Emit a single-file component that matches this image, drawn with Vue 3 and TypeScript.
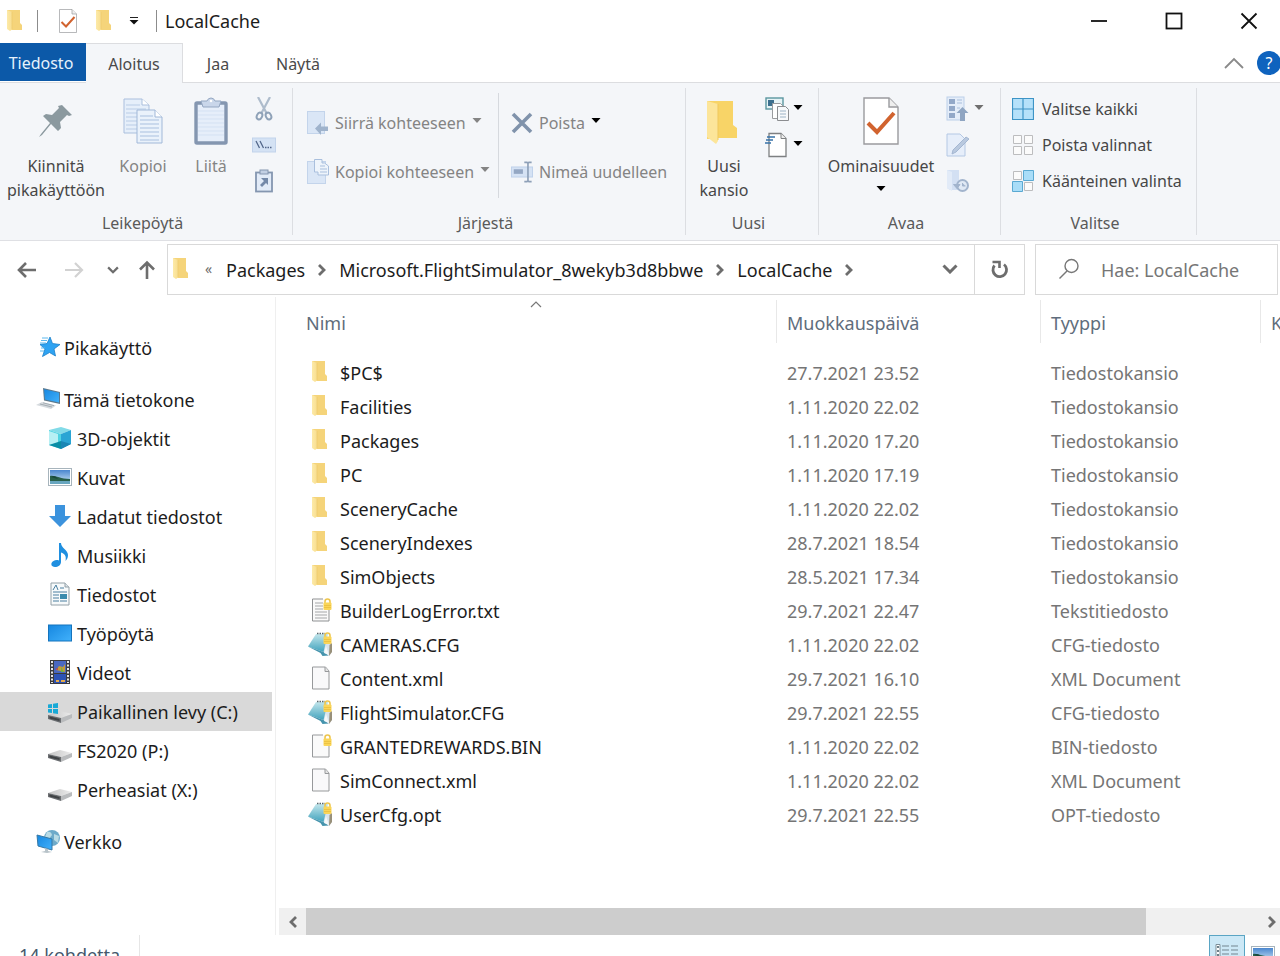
<script setup lang="ts">
interface NavItem {
  label: string
  icon: string
  selected?: boolean
}

interface FileRow {
  name: string
  icon: string
  date: string
  type: string
}

const navGroups: { root: NavItem; children: NavItem[] }[] = [
  { root: { label: 'Pikakäyttö', icon: 'star' }, children: [] },
  {
    root: { label: 'Tämä tietokone', icon: 'computer' },
    children: [
      { label: '3D-objektit', icon: 'cube' },
      { label: 'Kuvat', icon: 'pictures' },
      { label: 'Ladatut tiedostot', icon: 'download' },
      { label: 'Musiikki', icon: 'music' },
      { label: 'Tiedostot', icon: 'documents' },
      { label: 'Työpöytä', icon: 'desktop' },
      { label: 'Videot', icon: 'video' },
      { label: 'Paikallinen levy (C:)', icon: 'windrive', selected: true },
      { label: 'FS2020 (P:)', icon: 'drive' },
      { label: 'Perheasiat (X:)', icon: 'drive' },
    ],
  },
  { root: { label: 'Verkko', icon: 'network' }, children: [] },
]

const files: FileRow[] = [
  { name: '$PC$', icon: 'folder', date: '27.7.2021 23.52', type: 'Tiedostokansio' },
  { name: 'Facilities', icon: 'folder', date: '1.11.2020 22.02', type: 'Tiedostokansio' },
  { name: 'Packages', icon: 'folder', date: '1.11.2020 17.20', type: 'Tiedostokansio' },
  { name: 'PC', icon: 'folder', date: '1.11.2020 17.19', type: 'Tiedostokansio' },
  { name: 'SceneryCache', icon: 'folder', date: '1.11.2020 22.02', type: 'Tiedostokansio' },
  { name: 'SceneryIndexes', icon: 'folder', date: '28.7.2021 18.54', type: 'Tiedostokansio' },
  { name: 'SimObjects', icon: 'folder', date: '28.5.2021 17.34', type: 'Tiedostokansio' },
  { name: 'BuilderLogError.txt', icon: 'textlock', date: '29.7.2021 22.47', type: 'Tekstitiedosto' },
  { name: 'CAMERAS.CFG', icon: 'config', date: '1.11.2020 22.02', type: 'CFG-tiedosto' },
  { name: 'Content.xml', icon: 'page', date: '29.7.2021 16.10', type: 'XML Document' },
  { name: 'FlightSimulator.CFG', icon: 'config', date: '29.7.2021 22.55', type: 'CFG-tiedosto' },
  { name: 'GRANTEDREWARDS.BIN', icon: 'pagelock', date: '1.11.2020 22.02', type: 'BIN-tiedosto' },
  { name: 'SimConnect.xml', icon: 'page', date: '1.11.2020 22.02', type: 'XML Document' },
  { name: 'UserCfg.opt', icon: 'config', date: '29.7.2021 22.55', type: 'OPT-tiedosto' },
]

const crumbs = ['Packages', 'Microsoft.FlightSimulator_8wekyb3d8bbwe', 'LocalCache']
</script>

<template>
  <div class="window">
    <svg class="defs" aria-hidden="true">
      <defs>
        <linearGradient id="gFolder" x1="0" x2="1" y1="0" y2="0">
          <stop offset="0" stop-color="#fdeaa8" /><stop offset="1" stop-color="#f8de90" />
        </linearGradient>
        <linearGradient id="gBlue" x1="0" x2="1" y1="0" y2="1">
          <stop offset="0" stop-color="#1687e0" /><stop offset="1" stop-color="#41b1fb" />
        </linearGradient>
        <linearGradient id="gDrive" x1="0" x2="1" y1="0" y2="0">
          <stop offset="0" stop-color="#c4c4c4" /><stop offset="1" stop-color="#ececec" />
        </linearGradient>
        <linearGradient id="gNote" x1="0" x2="0" y1="0" y2="1">
          <stop offset="0" stop-color="#c3e6ec" /><stop offset="1" stop-color="#41a3bd" />
        </linearGradient>
        <linearGradient id="gSky" x1="0" x2="0" y1="0" y2="1">
          <stop offset="0" stop-color="#4a86cf" /><stop offset="1" stop-color="#d6ecf7" />
        </linearGradient>
      </defs>
      <symbol id="folder" viewBox="0 0 24 24">
        <path d="M4 1h13v13l2 2v5H8L4 19z" fill="#f5d47a" />
        <path d="M4 1l5 2v17.500l-2 1.500-3-2z" fill="url(#gFolder)" />
        <path d="M9 3v17" stroke="#eac66a" stroke-width=".6" />
      </symbol>
      <symbol id="page" viewBox="0 0 24 24">
        <path d="M4.500 1h13L21 5v18H4.500z" fill="#f9f9fa" stroke="#97999b" />
        <path d="M17 1v4.500h4" fill="#e4e4e4" stroke="#97999b" />
      </symbol>
      <symbol id="lock" viewBox="0 0 24 24">
        <path d="M17 5V3.500a2.500 2.500 0 0 1 5 0V5" fill="none" stroke="#edc54e" stroke-width="1.600" />
        <rect x="15.500" y="4.500" width="8" height="7.500" rx="1" fill="#fad558" />
        <path d="M16 7.500h7M16 9.500h7" stroke="#e6bb3b" stroke-width=".7" />
      </symbol>
      <symbol id="pagelock" viewBox="0 0 24 24">
        <path d="M4.500 1H16v11h5v11H4.500z" fill="#fafafa" />
        <path d="M15 1H4.500v22H21V12" fill="none" stroke="#97999b" />
        <use href="#lock" />
      </symbol>
      <symbol id="textlock" viewBox="0 0 24 24">
        <path d="M4.500 1H16v11h5v11H4.500z" fill="#fafafa" />
        <path d="M15 1H4.500v22H21V12" fill="none" stroke="#8f9193" />
        <path d="M7 5h8M7 8h8M7 11h8M7 14h12M7 17h12M7 20h12" stroke="#a4a6a8" />
        <use href="#lock" />
      </symbol>
      <symbol id="config" viewBox="0 0 24 24">
        <path d="M17 4l5 4 2 12-3 4-7-2z" fill="#d9e4ec" />
        <path d="M21.500 13l2.500-2v9l-3 4z" fill="#98907a" />
        <path d="M8 2h12L15.500 20 0 14.500z" fill="url(#gNote)" />
        <path d="M0 14.500L15.500 20l5 3.500-6 .5-2-3z" fill="#4694ad" />
        <path d="M18 14l3 9-5-2z" fill="#f5f8fa" />
        <path d="M9 1.500h8" stroke="#59666c" stroke-width="1.500" stroke-dasharray="1.500 1" />
        <use href="#lock" />
      </symbol>
      <symbol id="star" viewBox="0 0 24 24">
        <path d="M14 2l2.500 6.500 7.500 1-6 4.500 1.500 7-6-3.500-7 4 2.500-7.500L4 9.500l7-1z" fill="#2ea3f2" stroke="#1b7fc9" stroke-width=".8" />
        <path d="M6 3h6M5 5.500h6M4 8h6M5 13h4M4 16h4" stroke="#5bb8ee" />
      </symbol>
      <symbol id="computer" viewBox="0 0 24 24">
        <path d="M7 1l17 4v12L8 13.500z" fill="#5c788c" />
        <path d="M8 2.200l15 3.600v9.800L9 12.500z" fill="url(#gBlue)" />
        <path d="M6 15l14 3.500-5 3.500L0 18z" fill="#d5dade" />
        <path d="M4 17l12 3M7 15.800l11 2.800" stroke="#96a0a6" stroke-width=".8" />
      </symbol>
      <symbol id="cube" viewBox="0 0 24 24">
        <path d="M1 4l12-3 10 3-10 4z" fill="#82dbe8" />
        <path d="M1 4l12 4v15L1 19z" fill="#4fd3e2" />
        <path d="M1 5l9 3v9l-9 2z" fill="#b7f0f4" />
        <path d="M13 8l10-4v14l-10 5z" fill="#2aa5d4" />
        <path d="M1 19l12-4v8z" fill="#0a8ea6" />
        <path d="M13 15l10 3-10 5z" fill="#1a86b4" />
      </symbol>
      <symbol id="pictures" viewBox="0 0 24 24">
        <rect x=".5" y="3.500" width="23" height="17" fill="#fff" stroke="#a7b4bc" />
        <rect x="2" y="5" width="20" height="14" fill="url(#gSky)" />
        <path d="M2 11c5-1 10 3 20 3v2H2z" fill="#285f4a" />
        <path d="M2 16h20v3H2z" fill="#68a6bf" />
        <path d="M3 12q4-3 7 2z" fill="#18483c" />
      </symbol>
      <symbol id="download" viewBox="0 0 24 24">
        <path d="M7 1h10v11h6L12 23 1 12h6z" fill="#3c93dd" />
      </symbol>
      <symbol id="music" viewBox="0 0 24 24">
        <path d="M11 0h2c0 5 7 7 7 12 0 3-1 4-2.500 6 1-5-.5-7-4.500-8.500V19c0 3-3 5-6 5-4 0-5-4-1.500-6 1.500-1 3.500-1.300 5.500-.5z" fill="#1f8fe0" />
      </symbol>
      <symbol id="documents" viewBox="0 0 24 24">
        <path d="M3 1h14l4 4v18H3z" fill="#f7fafb" stroke="#94a1a8" />
        <path d="M17 1v4h4" fill="#dce3e8" stroke="#94a1a8" />
        <path d="M5 8l3-5 2 5M12 6h4M5 10h14M5 13h6M5 16h6M5 19h6M12 19h7" stroke="#4a7fa0" fill="none" />
        <rect x="12" y="12" width="7" height="5" fill="#3b8bad" />
      </symbol>
      <symbol id="desktop" viewBox="0 0 24 24">
        <rect x=".5" y="4" width="23" height="16" fill="url(#gBlue)" stroke="#1574bd" />
      </symbol>
      <symbol id="video" viewBox="0 0 24 24">
        <rect x="2" width="20" height="24" fill="#3a3a3d" />
        <rect x="6" y="1" width="12" height="12" fill="#4a68c0" />
        <rect x="6" y="14" width="12" height="9" fill="#2d53b5" />
        <path d="M8 10l3-4 4 1 2-3v8z" fill="#c09a3a" />
        <path d="M7 9l3-1v2z" fill="#c23f4e" />
        <path d="M13 7l3 5h-3z" fill="#75b13c" />
        <path d="M8 21h3M13 21h4" stroke="#e5a94a" stroke-width="2" />
        <path d="M4 1v22M20 1v22" stroke="#e6e6e6" stroke-width="2" stroke-dasharray="2 1.500" />
      </symbol>
      <symbol id="drive" viewBox="0 0 24 24">
        <path d="M0 16l12-4 12 3-11 4z" fill="url(#gDrive)" />
        <path d="M0 16l13 3v5L0 20z" fill="#6a6d70" />
        <path d="M1.500 17.500l10 2.500v2L1.500 19.500z" fill="#3f4244" />
        <path d="M13 19l11-4v4l-11 5z" fill="#b9bbbd" />
      </symbol>
      <symbol id="windrive" viewBox="0 0 24 24">
        <use href="#drive" />
        <path d="M0 5.500l4-.6v4H0zM5 4.700l5-.7v4.900H5zM0 10h4v4l-4-.6zM5 10h5v5l-5-.8z" fill="#18a9d6" />
      </symbol>
      <symbol id="network" viewBox="0 0 24 24">
        <circle cx="16" cy="9" r="8" fill="#6eaac9" />
        <path d="M11 3q4-1 5 3l-3 4-4-2zM18 5l5 2-1 7-4-3z" fill="#b9dbe5" />
        <path d="M1 6l15 4v11L2 17z" fill="url(#gBlue)" stroke="#3779a5" />
        <path d="M9 19v3l-4 1 6 1 5-1-4-1v-2z" fill="#b8c3c9" />
      </symbol>
      <symbol id="check" viewBox="0 0 36 48">
        <path d="M1 1h25l9 9v37H1z" fill="#fff" stroke="#9a9b9e" stroke-width="1.400" />
        <path d="M26 1v9h9" fill="#eee" stroke="#9a9b9e" stroke-width="1.400" />
        <path d="M5 26l9 9 17-19" fill="none" stroke="#d1632f" stroke-width="4" />
      </symbol>
      <symbol id="caret" viewBox="0 0 10 5">
        <path d="M.5 0h9L5 5z" fill="currentColor" />
      </symbol>
      <symbol id="chev" viewBox="0 0 12 14">
        <path d="M3 2L8 7l-5 5" fill="none" stroke="currentColor" stroke-width="2.800" />
      </symbol>
      <symbol id="chevdown" viewBox="0 0 16 10">
        <path d="M1.500 1.500L8 8l6.500-6.500" fill="none" stroke="currentColor" stroke-width="3" />
      </symbol>
    </svg>

    <header class="titlebar">
      <svg class="i24 sys"><use href="#folder" /></svg>
      <span class="bar"></span>
      <button class="qa check" aria-label="Ominaisuudet"><svg width="18" height="24"><use href="#check" /></svg></button>
      <button class="qa" aria-label="Uusi kansio"><svg class="i24"><use href="#folder" /></svg></button>
      <button class="qa more" aria-label="Mukauta pikatyökaluriviä">
        <svg width="10" height="8" viewBox="0 0 10 8"><path d="M1 .5h8" stroke="#222" /><path d="M.5 3h9L5 7.500z" fill="#111" /></svg>
      </button>
      <span class="bar"></span>
      <h1>LocalCache</h1>
      <div class="winbtns">
        <button aria-label="Pienennä"><svg width="18" height="18" viewBox="0 0 18 18"><path d="M1 9h16" stroke="#111" stroke-width="1.800" /></svg></button>
        <button aria-label="Suurenna"><svg width="18" height="18" viewBox="0 0 18 18"><rect x="1.500" y="1.500" width="15" height="15" fill="none" stroke="#111" stroke-width="1.800" /></svg></button>
        <button aria-label="Sulje"><svg width="18" height="18" viewBox="0 0 18 18"><path d="M1.500 1.500l15 15M16.500 1.500l-15 15" stroke="#111" stroke-width="1.800" /></svg></button>
      </div>
    </header>

    <nav class="tabs">
      <button class="tab file">Tiedosto</button>
      <button class="tab active">Aloitus</button>
      <button class="tab share">Jaa</button>
      <button class="tab view">Näytä</button>
      <span class="grow"></span>
      <button class="collapse" aria-label="Pienennä valintanauha">
        <svg width="20" height="12" viewBox="0 0 20 12"><path d="M1 11l9-9 9 9" fill="none" stroke="#8a8a8a" stroke-width="1.800" /></svg>
      </button>
      <button class="help" aria-label="Ohje">?</button>
    </nav>

    <section class="ribbon">
      <div class="group clip">
        <div class="body">
          <button class="big pin">
            <svg width="36" height="48" viewBox="0 0 36 48">
              <path d="M24 8l10 10-3 1-2-1-7 7 1 6-3 3-7-7L4 38l-3 2 2-3L12 26l-7-7 3-2 6 1 7-7-1-2z" fill="#8b999f" />
            </svg>
            <span>Kiinnitä<br />pikakäyttöön</span>
          </button>
          <button class="big dim copy">
            <svg width="42" height="48" viewBox="0 0 42 48">
              <path d="M2 2h18l7 6v28H2z" fill="#e6effa" stroke="#aabfdd" />
              <path d="M20 2v6h7" fill="#fff" stroke="#aabfdd" />
              <path d="M4 8h14M4 12h20M4 16h20M4 20h20M4 24h20M4 28h20M4 32h20" stroke="#b9cce6" />
              <path d="M15 13h18l7 7v26H15z" fill="#eaf2fb" stroke="#a1b8d8" />
              <path d="M33 13v7h7" fill="#fff" stroke="#a1b8d8" />
              <path d="M18 19h13M18 23h19M18 27h19M18 31h19M18 35h19M18 39h19M18 43h19" stroke="#a9c0df" />
            </svg>
            <span>Kopioi</span>
          </button>
          <button class="big dim paste">
            <svg width="34" height="48" viewBox="0 0 34 48">
              <rect x="2" y="6" width="30" height="40" rx="1" fill="#e6eefa" stroke="#8496b0" stroke-width="3.400" />
              <path d="M4 14h26M4 18h26M4 22h26M4 26h26M4 30h26M4 34h26M4 38h26" stroke="#d4e1f3" />
              <path d="M7 4h6q1-3 4-3t4 3h6l-2 6H9z" fill="#c9d6ea" stroke="#94a7c2" />
              <circle cx="17" cy="4" r="1.300" fill="#fff" />
            </svg>
            <span>Liitä</span>
          </button>
          <div class="small">
            <button aria-label="Leikkaa">
              <svg width="24" height="24" viewBox="0 0 24 24"><path d="M6 0l9 17M18 0L9 17" stroke="#aebccc" stroke-width="2.200" /><ellipse cx="7.500" cy="19" rx="2.600" ry="3.600" fill="none" stroke="#8fa2b8" stroke-width="2" transform="rotate(25 7.500 19)" /><ellipse cx="16.500" cy="19" rx="2.600" ry="3.600" fill="none" stroke="#8fa2b8" stroke-width="2" transform="rotate(-25 16.500 19)" /></svg>
            </button>
            <button aria-label="Kopioi polku">
              <svg width="24" height="24" viewBox="0 0 24 24"><rect x=".5" y="5" width="23" height="14" fill="#d4e2f4" stroke="#c2d3eb" /><path d="M4 8l3.500 7M8 8l3.500 7" stroke="#53678a" stroke-width="1.300" /><path d="M13 14.500h7" stroke="#53678a" stroke-width="1.500" stroke-dasharray="1.500 1" /></svg>
            </button>
            <button aria-label="Liitä pikakuvake">
              <svg width="24" height="24" viewBox="0 0 24 24"><rect x="4" y="3.500" width="16" height="19" fill="#e2ebf8" stroke="#8496b0" stroke-width="1.800" /><rect x="8" y="1" width="8" height="4" fill="#c3d0e4" stroke="#8496b0" /><path d="M9 9h7v7l-2-2-4 4-2-2 4-4z" fill="#7489a9" /></svg>
            </button>
          </div>
        </div>
        <div class="caption">Leikepöytä</div>
      </div>

      <div class="group organize">
        <div class="body">
          <div class="medium">
            <button class="dim">
              <svg width="22" height="24" viewBox="0 0 22 24"><rect x=".5" y=".5" width="17" height="22" fill="#dae6f6" stroke="#c3d4eb" /><path d="M8 17.500l6-6v4h7v4.500h-7v4z" fill="#9fb3cc" /></svg>
              <span>Siirrä kohteeseen</span><svg class="caret"><use href="#caret" /></svg>
            </button>
            <button class="dim">
              <svg width="22" height="26" viewBox="0 0 22 26"><rect x=".5" y="2.500" width="18" height="22" fill="#dae6f6" stroke="#c3d4eb" /><path d="M7.500.5H15V4h2.500l4 3v9H11v-3H7.500z" fill="#eef4fb" stroke="#a9bfdd" /><path d="M13 7h5M13 10h7M13 13h7" stroke="#a9bfdd" /></svg>
              <span>Kopioi kohteeseen</span><svg class="caret"><use href="#caret" /></svg>
            </button>
          </div>
          <span class="divider"></span>
          <div class="medium second">
            <button class="dim">
              <svg width="22" height="22" viewBox="0 0 22 22"><path d="M2 2l18 18M20 2L2 20" stroke="#8093ab" stroke-width="3.600" /></svg>
              <span>Poista</span><svg class="caret black"><use href="#caret" /></svg>
            </button>
            <button class="dim">
              <svg width="22" height="24" viewBox="0 0 24 24"><rect x=".5" y="6.500" width="23" height="11" fill="#d5e2f4" stroke="#bdd0ea" /><rect x="3" y="9" width="10" height="5" fill="#94a7c3" /><path d="M18.500 2v20M14.500 1.500h3l1 1 1-1h3M14.500 22.500h3l1-1 1 1h3" stroke="#8ea0b8" stroke-width="1.800" fill="none" /></svg>
              <span>Nimeä uudelleen</span>
            </button>
          </div>
        </div>
        <div class="caption">Järjestä</div>
      </div>

      <div class="group new">
        <div class="body">
          <button class="big newfolder">
            <svg width="34" height="48" viewBox="0 0 34 48">
              <path d="M0 4h26v24l4 3v10H10L0 42z" fill="#f8d467" />
              <path d="M0 4l11 3v37l-2 3-9-7z" fill="#fce59a" />
              <path d="M11 7v36" stroke="#efc75c" />
            </svg>
            <span>Uusi<br />kansio</span>
          </button>
          <div class="small pairs">
            <button aria-label="Uusi kohde">
              <svg width="24" height="24" viewBox="0 0 24 24"><rect x="1" y="1" width="17" height="11" fill="#e6f3f6" stroke="#5b96a0" stroke-width="1.400" /><rect x="3" y="3" width="6" height="6" fill="#3c6f8e" /><path d="M7.500 6.500h8l3 3v12h-11z" fill="#fff" stroke="#9a9c9f" /><path d="M12.500 9.500h8l3 3v11h-11z" fill="#f7f9fb" stroke="#8b8d90" /><path d="M15 14h6M15 17h6M15 20h6" stroke="#9cb3c6" /></svg>
              <svg class="caret black"><use href="#caret" /></svg>
            </button>
            <button aria-label="Helppo käyttö">
              <svg width="24" height="26" viewBox="0 0 24 26"><path d="M4 1.500h12l5 5v18H4z" fill="#fff" stroke="#7e8082" stroke-width="1.300" /><path d="M16 1.500v5h5" fill="#eee" stroke="#7e8082" /><path d="M2 5h8M1 8h7M0 11h6" stroke="#3671a8" stroke-width="1.700" /></svg>
              <svg class="caret black"><use href="#caret" /></svg>
            </button>
          </div>
        </div>
        <div class="caption">Uusi</div>
      </div>

      <div class="group open">
        <div class="body">
          <button class="big props">
            <svg width="36" height="48"><use href="#check" /></svg>
            <span>Ominaisuudet</span>
            <svg class="caret black"><use href="#caret" /></svg>
          </button>
          <div class="small pairs">
            <button aria-label="Avaa">
              <svg width="24" height="26" viewBox="0 0 24 26"><rect x="1" y="1" width="17" height="23" fill="#e4edf9" stroke="#bccfe9" /><path d="M3 3h6v5H3zM3 10h6v5H3zM3 17h6v5H3z" fill="#92a8c8" /><path d="M11 4h5M11 7h5M11 12h3" stroke="#a9bedb" /><path d="M16.500 11l6 6h-3.500v8h-5v-8h-3.500z" fill="#8fa5c2" /></svg>
              <svg class="caret grey"><use href="#caret" /></svg>
            </button>
            <button aria-label="Muokkaa">
              <svg width="24" height="24" viewBox="0 0 24 24"><path d="M1 1h13l5 5v17H1z" fill="#e6eefa" stroke="#b4c8e4" /><path d="M6 21l1-4L20 4l3 2L10 19z" fill="#b9c9df" stroke="#a4b7d2" /></svg>
            </button>
            <button aria-label="Historia">
              <svg width="24" height="24" viewBox="0 0 24 24"><path d="M1 1h12v11l2 2v7H4l-3-2z" fill="#d3e0f3" /><path d="M1 1l5 2v19l-5-3z" fill="#e2ebf8" /><circle cx="16.500" cy="16.500" r="5.500" fill="#e0e9f5" stroke="#a2b4cd" stroke-width="2" /><path d="M7.500 15.500l3.500 4 3-4zM16.500 14v3h3" fill="#a2b4cd" stroke="#a2b4cd" /></svg>
            </button>
          </div>
        </div>
        <div class="caption">Avaa</div>
      </div>

      <div class="group select">
        <div class="body">
          <div class="small wide">
            <button>
              <svg width="22" height="22" viewBox="0 0 22 22"><path d="M.5.5h21v21H.5zM11 .5v21M.5 11h21" fill="#b5e1fa" stroke="#3d94c6" stroke-width="1.200" /></svg>
              <span>Valitse kaikki</span>
            </button>
            <button>
              <svg width="22" height="22" viewBox="0 0 22 22"><path d="M1.500 1.500h8v8h-8zM12.500 1.500h8v8h-8zM1.500 12.500h8v8h-8zM12.500 12.500h8v8h-8z" fill="#fbfbfb" stroke="#bcbdbf" /></svg>
              <span>Poista valinnat</span>
            </button>
            <button>
              <svg width="22" height="22" viewBox="0 0 22 22"><path d="M1.500 1.500h8v8h-8zM12.500 12.500h8v8h-8z" fill="#fbfbfb" stroke="#bcbdbf" /><path d="M11.500.5h10v10h-10zM.5 11.500h10v10H.5z" fill="#a9ddf8" stroke="#5aa9d2" /></svg>
              <span>Käänteinen valinta</span>
            </button>
          </div>
        </div>
        <div class="caption">Valitse</div>
      </div>
    </section>

    <section class="addressrow">
      <button class="arrow back" aria-label="Takaisin"><svg width="20" height="18" viewBox="0 0 20 18"><path d="M19 9H3M9 2L2 9l7 7" fill="none" stroke="#6d6d6d" stroke-width="2.600" /></svg></button>
      <button class="arrow forward" aria-label="Eteenpäin"><svg width="20" height="18" viewBox="0 0 20 18"><path d="M1 9h16M11 2l7 7-7 7" fill="none" stroke="#d2d2d2" stroke-width="2.200" /></svg></button>
      <button class="arrow recent" aria-label="Viimeisimmät sijainnit"><svg width="12" height="8"><use href="#chevdown" /></svg></button>
      <button class="arrow up" aria-label="Ylös"><svg width="18" height="20" viewBox="0 0 18 20"><path d="M9 19V3M2 9.500L9 2.500l7 7" fill="none" stroke="#6d6d6d" stroke-width="2.600" /></svg></button>
      <div class="address">
        <svg class="i24"><use href="#folder" /></svg>
        <span class="laquo">«</span>
        <template v-for="c in crumbs" :key="c">
          <button class="crumb">{{ c }}</button>
          <svg class="chev"><use href="#chev" /></svg>
        </template>
        <span class="grow"></span>
        <button class="drop" aria-label="Aiemmat sijainnit"><svg width="16" height="10"><use href="#chevdown" /></svg></button>
        <button class="refresh" aria-label="Päivitä">
          <svg width="20" height="20" viewBox="0 0 20 20"><path d="M14 5.500A6.800 6.800 0 1 1 4.500 6.500" fill="none" stroke="#6d6d6d" stroke-width="2.800" /><path d="M2.500 3h7v6" fill="none" stroke="#6d6d6d" stroke-width="2.600" /></svg>
        </button>
      </div>
      <label class="search">
        <svg width="22" height="22" viewBox="0 0 22 22"><circle cx="13.500" cy="8" r="6.500" fill="none" stroke="#777" stroke-width="1.400" /><path d="M9 13l-7.500 7.500" stroke="#777" stroke-width="1.500" /></svg>
        <input type="text" placeholder="Hae: LocalCache" aria-label="Hae: LocalCache" />
      </label>
    </section>

    <main class="main">
      <nav class="sidebar">
        <div v-for="g in navGroups" :key="g.root.label" class="navgroup">
          <a href="#" class="navitem root"><svg class="i24"><use :href="'#' + g.root.icon" /></svg>{{ g.root.label }}</a>
          <a v-for="n in g.children" :key="n.label" href="#" class="navitem" :class="{ selected: n.selected }">
            <svg class="i24"><use :href="'#' + n.icon" /></svg>{{ n.label }}
          </a>
        </div>
      </nav>
      <section class="content">
        <div class="listing">
          <table>
            <colgroup><col class="c-name" /><col class="c-date" /><col class="c-type" /><col /></colgroup>
            <thead>
              <tr>
                <th>
                  <div class="head first">Nimi
                    <svg class="sort" width="12" height="7" viewBox="0 0 12 7"><path d="M1 6l5-5 5 5" fill="none" stroke="#777" stroke-width="1.200" /></svg>
                  </div>
                </th>
                <th><div class="head">Muokkauspäivä</div></th>
                <th><div class="head">Tyyppi</div></th>
                <th><div class="head last">K</div></th>
              </tr>
            </thead>
            <tbody>
              <tr v-for="f in files" :key="f.name">
                <td class="name"><div><svg class="i24"><use :href="'#' + f.icon" /></svg>{{ f.name }}</div></td>
                <td>{{ f.date }}</td>
                <td>{{ f.type }}</td>
                <td></td>
              </tr>
            </tbody>
          </table>
        </div>
        <div class="scrollbar">
          <button class="sb-left" aria-label="Vieritä vasemmalle"><svg class="chev flip"><use href="#chev" /></svg></button>
          <div class="thumb"></div>
          <div class="rest"></div>
          <button class="sb-right" aria-label="Vieritä oikealle"><svg class="chev"><use href="#chev" /></svg></button>
        </div>
      </section>
    </main>

    <footer class="status">
      <span class="count">14 kohdetta</span>
      <span class="grow"></span>
      <button class="viewbtn on" aria-label="Tiedot">
        <svg width="24" height="24" viewBox="0 0 24 24"><path d="M1 1.500h4v21H1z" fill="#fff" stroke="#7d8f99" /><path d="M2 4h2M2 8h2M2 12h2M2 16h2" stroke="#3e5561" stroke-width="1.500" /><path d="M7 3h7M16 3h7M7 7h7M16 7h7M7 11h7M16 11h7M7 15h7M16 15h7" stroke="#72858f" /></svg>
      </button>
      <button class="viewbtn" aria-label="Suuret kuvakkeet"><svg class="i24"><use href="#pictures" /></svg></button>
    </footer>
  </div>
</template>

<style>
html,
body {
  margin: 0;
  overflow: hidden;
  background: #fff;
}
</style>

<style scoped>
.window {
  display: flex;
  flex-direction: column;
  height: calc(100vh + 19px);
  background: #fff;
  color: #1c1c1c;
  font-family: "Noto Sans", "Open Sans", sans-serif;
  font-size: 18px;
  line-height: 24px;
}
.window * {
  box-sizing: border-box;
}
button {
  border: 0;
  padding: 0;
  margin: 0;
  background: none;
  color: inherit;
  font: inherit;
  white-space: nowrap;
}
svg {
  display: block;
  flex: none;
}
.defs {
  position: absolute;
  width: 0;
  height: 0;
}
.i24 {
  width: 24px;
  height: 24px;
}
.caret {
  width: 10px;
  height: 5px;
}
.black {
  color: #000;
}
.grey {
  color: #6f6f6f;
}
.chev {
  width: 12px;
  height: 14px;
  color: #6d6d6d;
}
.grow {
  flex: 1;
}

.titlebar {
  display: flex;
  align-items: center;
  height: 43px;
  flex: none;
  padding-bottom: 2px;
}
.sys {
  margin: 0 10px 0 3px;
}
.bar {
  width: 1px;
  height: 22px;
  background: #8c8c8c;
}
.qa {
  margin-left: 11px;
}
.qa.check {
  margin-left: 21px;
  margin-right: 4px;
}
.qa.more {
  margin-left: 13px;
  margin-right: 17px;
}
h1 {
  margin: 0 0 0 8px;
  font-size: 18px;
  font-weight: 400;
  line-height: 24px;
}
.winbtns {
  display: flex;
  gap: 13px;
  margin-left: auto;
}
.winbtns button {
  display: grid;
  place-items: center;
  width: 62px;
  height: 38px;
}

.tabs {
  display: flex;
  align-items: center;
  height: 40px;
  flex: none;
  border-bottom: 1px solid #dcdde0;
  font-size: 16px;
  color: #4a4a4a;
}
.tab {
  height: 40px;
  padding-top: 2px;
}
.file {
  width: 86px;
  height: 38px;
  align-self: flex-start;
  padding-right: 4px;
  background: #0c59a8;
  color: #e6f2fc;
}
.active {
  width: 97px;
  border: solid #dcdde0;
  border-width: 1px 1px 0 0;
  background: #f4f6f9;
}
.share {
  width: 70px;
}
.view {
  width: 90px;
}
.collapse {
  margin-right: 13px;
}
.help {
  width: 24px;
  height: 24px;
  margin-right: -1px;
  border-radius: 50%;
  background: #0f63be;
  color: #fff;
}

.ribbon {
  display: flex;
  height: 158px;
  flex: none;
  padding: 5px 0;
  border-bottom: 1px solid #dfe0e4;
  background: #f4f6f9;
  font-size: 16px;
  color: #474747;
}
.group {
  display: flex;
  flex: none;
  flex-direction: column;
  border-right: 1px solid #dcdee2;
}
.clip {
  width: 293px;
}
.organize {
  width: 393px;
}
.new {
  width: 133px;
}
.open {
  width: 182px;
}
.select {
  width: 196px;
}
.body {
  display: flex;
  flex: 1;
  align-items: flex-start;
}
.caption {
  height: 24px;
  padding-right: 7px;
  text-align: center;
  color: #5a5a5a;
}
.dim {
  color: #848484;
}
.big {
  display: flex;
  flex-direction: column;
  align-items: center;
  flex: none;
  padding-top: 9px;
}
.big span {
  margin-top: 9px;
}
.big .caret {
  margin-top: 8px;
}
.pin {
  width: 112px;
}
.copy {
  width: 62px;
}
.paste {
  width: 74px;
}
.small {
  display: flex;
  flex-direction: column;
  padding: 3px 0 0 4px;
}
.small button {
  display: flex;
  align-items: center;
  height: 36px;
  gap: 8px;
}
.pairs button {
  gap: 4px;
}
.small .caret,
.medium .caret {
  margin-bottom: 4px;
}
.medium {
  display: flex;
  flex-direction: column;
  width: 191px;
  padding: 10px 0 0;
}
.organize .body {
  padding-left: 14px;
}
.medium button {
  display: flex;
  align-items: center;
  gap: 6px;
  height: 49px;
}
.divider {
  width: 1px;
  height: 105px;
  margin: 5px 12px 0 0;
  background: #d6d9de;
}
.second {
  width: auto;
}
.newfolder {
  width: 76px;
}
.props {
  width: 124px;
}
.open .small,
.new .small {
  padding-left: 3px;
}
.wide {
  padding-left: 11px;
}

.addressrow {
  display: flex;
  align-items: center;
  height: 56px;
  flex: none;
  padding: 0 2px 0 17px;
}
.arrow {
  height: 40px;
  padding-top: 2px;
  color: #6d6d6d;
}
.forward {
  margin-left: 27px;
}
.recent {
  margin-left: 23px;
}
.up {
  margin-left: 19px;
  margin-right: 11px;
}
.address {
  display: flex;
  align-items: center;
  flex: 1;
  min-width: 0;
  height: 51px;
  border: 1px solid #d9d9d9;
}
.address .i24 {
  margin-left: 1px;
}
.crumb {
  padding-top: 2px;
}
.laquo {
  width: 12px;
  margin: 0 9px 0 12px;
  font-size: 14px;
  color: #6d6d6d;
}
.address .chev {
  margin: 2px 11px 0;
}
.drop {
  margin-right: 16px;
  color: #6d6d6d;
}
.refresh {
  display: grid;
  place-items: center;
  width: 50px;
  height: 100%;
  border-left: 1px solid #d9d9d9;
}
.search {
  display: flex;
  align-items: center;
  flex: none;
  width: 243px;
  height: 51px;
  margin-left: 10px;
  padding-left: 22px;
  gap: 21px;
  border: 1px solid #d9d9d9;
}
.search input {
  flex: 1;
  min-width: 0;
  padding: 2px 0 0;
  border: 0;
  outline: 0;
  background: none;
  font: inherit;
}
.search input::placeholder {
  color: #767676;
  opacity: 1;
}

.main {
  display: flex;
  flex: 1;
  min-height: 0;
}
.sidebar {
  flex: none;
  width: 276px;
  padding: 31px 3px 0 0;
  border-right: 1px solid #efefef;
}
.navgroup {
  margin-bottom: 13px;
}
.navitem {
  display: flex;
  align-items: center;
  height: 39px;
  padding-left: 48px;
  gap: 5px;
  color: #1c1c1c;
  text-decoration: none;
  white-space: nowrap;
}
.root {
  padding-left: 36px;
  gap: 4px;
}
.navitem .i24,
.name .i24 {
  margin-bottom: 2px;
}
.selected {
  background: #d9d9d9;
}
.content {
  display: flex;
  flex: 1;
  flex-direction: column;
  min-width: 0;
}
.listing {
  flex: 1;
  min-height: 0;
  overflow: hidden;
}
table {
  width: 100%;
  table-layout: fixed;
  border-collapse: collapse;
}
.c-name {
  width: 501px;
}
.c-date {
  width: 264px;
}
.c-type {
  width: 220px;
}
th {
  height: 59px;
  padding: 3px 0 0;
  vertical-align: top;
  text-align: left;
  font-weight: 400;
  color: #5f6d7c;
}
.head {
  position: relative;
  height: 43px;
  padding: 11px 0 0 10px;
  border-right: 1px solid #e8e8e8;
  white-space: nowrap;
}
.head.first {
  padding-left: 30px;
}
.head.last {
  border-right: 0;
}
.sort {
  position: absolute;
  top: 1px;
  left: 52%;
  margin-left: -6px;
}
td {
  height: 34px;
  padding: 0 0 0 10px;
  color: #757575;
}
td.name {
  padding-left: 32px;
  color: #1c1c1c;
}
td.name div {
  display: flex;
  align-items: center;
  gap: 8px;
}
.scrollbar {
  display: flex;
  height: 27px;
  flex: none;
  margin-left: 3px;
  background: #f0f0f0;
}
.sb-left,
.sb-right {
  display: grid;
  place-items: center;
  flex: none;
  width: 27px;
}
.sb-right {
  width: 16px;
}
.flip {
  transform: rotate(180deg);
}
.thumb {
  flex: 840;
  background: #cdcdcd;
}
.rest {
  flex: 118;
}
.status {
  display: flex;
  align-items: flex-start;
  height: 40px;
  flex: none;
  padding-left: 19px;
  color: #44586c;
}
.count {
  width: 121px;
  height: 40px;
  padding-top: 8px;
  border-right: 1px solid #e6e6e6;
}
.viewbtn {
  display: grid;
  place-items: center;
  width: 35px;
  height: 40px;
}
.viewbtn.on {
  width: 36px;
  border: 1px solid #5aa5c4;
  background: #cce8f6;
}
</style>
